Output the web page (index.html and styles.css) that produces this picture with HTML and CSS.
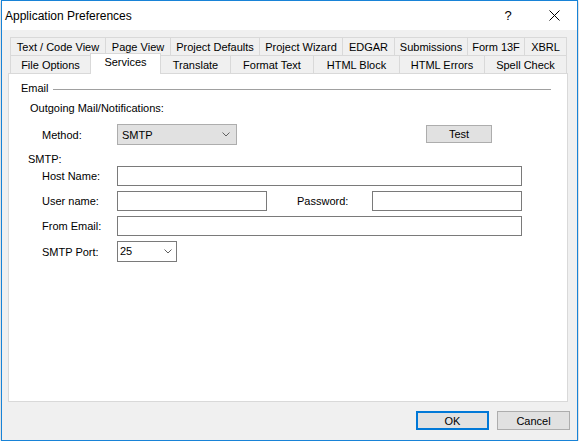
FILE: index.html
```html
<!DOCTYPE html>
<html>
<head>
<meta charset="utf-8">
<link rel="stylesheet" href="styles.css">
</head>
<body>
<div class="window">
  <div class="titlebar">
    <span class="title">Application Preferences</span>
    <span class="tb-btn help">?</span>
    <span class="tb-btn close">
      <svg width="11" height="11" viewBox="0 0 11 11"><path d="M0.5 0.5 L10.5 10.5 M10.5 0.5 L0.5 10.5" stroke="#000" stroke-width="1" fill="none"/></svg>
    </span>
  </div>
  <div class="client">
    <div class="tabs">
      <div class="tabrow top">
        <div class="tab">Text / Code View</div>
        <div class="tab">Page View</div>
        <div class="tab">Project Defaults</div>
        <div class="tab">Project Wizard</div>
        <div class="tab">EDGAR</div>
        <div class="tab">Submissions</div>
        <div class="tab">Form 13F</div>
        <div class="tab">XBRL</div>
      </div>
      <div class="tabrow bottom">
        <div class="tab">File Options</div>
        <div class="tab sel">Services</div>
        <div class="tab">Translate</div>
        <div class="tab">Format Text</div>
        <div class="tab">HTML Block</div>
        <div class="tab">HTML Errors</div>
        <div class="tab">Spell Check</div>
      </div>
      <div class="panel">
        <div class="group-head"><span>Email</span><span class="rule"></span></div>
        <div class="sub">Outgoing Mail/Notifications:</div>
        <div class="method">
          <span class="lbl">Method:</span>
          <div class="combo"><span>SMTP</span>
            <svg width="8" height="5" viewBox="0 0 8 5"><polyline points="0.5,0.5 4,4 7.5,0.5" stroke="#606060" stroke-width="1" fill="none"/></svg>
          </div>
          <button class="btn test">Test</button>
        </div>
        <div class="smtp">SMTP:</div>
        <div class="form">
          <div class="row"><span class="lbl">Host Name:</span><input class="field wide" type="text"></div>
          <div class="row"><span class="lbl">User name:</span><input class="field half" type="text"><span class="lbl lbl2">Password:</span><input class="field half" type="password"></div>
          <div class="row"><span class="lbl">From Email:</span><input class="field wide" type="text"></div>
          <div class="row portrow"><span class="lbl">SMTP Port:</span>
            <div class="port"><span class="portval">25</span>
              <svg width="8" height="5" viewBox="0 0 8 5"><polyline points="0.5,0.5 4,4 7.5,0.5" stroke="#606060" stroke-width="1" fill="none"/></svg>
            </div>
          </div>
        </div>
      </div>
    </div>
    <div class="buttons">
      <button class="btn default">OK</button>
      <button class="btn">Cancel</button>
    </div>
  </div>
</div>
</body>
</html>
```
FILE: styles.css
```css
html, body {
  margin: 0;
  padding: 0;
  background: #ffffff;
}
body {
  font-family: "Liberation Sans", Arial, sans-serif;
  font-size: 11px;
  color: #000;
}
.window {
  box-sizing: border-box;
  width: 577px;
  height: 441px;
  margin-left: 1px;
  border: 1px solid #1883d7;
  background: #f0f0f0;
  display: flex;
  flex-direction: column;
  box-shadow: 0 1px 3px rgba(0, 0, 0, 0.3);
}
.titlebar {
  flex: none;
  height: 29px;
  background: #fff;
  display: flex;
  align-items: center;
}
.title {
  flex: 1;
  padding-left: 3px;
  font-size: 12px;
}
.tb-btn {
  width: 46px;
  height: 29px;
  display: flex;
  align-items: center;
  justify-content: center;
}
.help {
  font-size: 13px;
}
.client {
  flex: 1;
  padding: 7px 7px 0 6px;
  display: flex;
  flex-direction: column;
}
.tabrow {
  display: flex;
  height: 18px;
  margin-left: 2px;
}
.tab {
  box-sizing: border-box;
  height: 18px;
  border-top: 1px solid #d9d9d9;
  border-right: 1px solid #d9d9d9;
  display: flex;
  align-items: center;
  justify-content: center;
  line-height: 16px;
  white-space: nowrap;
}
.tab:first-child {
  border-left: 1px solid #d9d9d9;
}
.top .tab:nth-child(1) { width: 96px; }
.top .tab:nth-child(2) { width: 65px; }
.top .tab:nth-child(3) { width: 89px; }
.top .tab:nth-child(4) { width: 83px; }
.top .tab:nth-child(5) { width: 52px; }
.top .tab:nth-child(6) { width: 73px; }
.top .tab:nth-child(7) { width: 57px; }
.top .tab:nth-child(8) { width: 42px; }
.bottom .tab:nth-child(1) { width: 81px; }
.bottom .tab:nth-child(2) { width: 71px; }
.bottom .tab:nth-child(3) { width: 70px; }
.bottom .tab:nth-child(4) { width: 83px; }
.bottom .tab:nth-child(5) { width: 86px; }
.bottom .tab:nth-child(6) { width: 85px; }
.bottom .tab:nth-child(7) { width: 82px; }
.tab.sel {
  background: #fff;
  margin-top: -2px;
  margin-left: -1px;
  height: 21px;
  border-left: 1px solid #d9d9d9;
  align-items: flex-start;
  position: relative;
  z-index: 1;
}
.panel {
  box-sizing: border-box;
  width: 560px;
  height: 329px;
  border: 1px solid #d9d9d9;
  background: #fff;
}
.group-head {
  display: flex;
  align-items: center;
  margin: 7px 16px 0 12px;
  height: 14px;
  line-height: 14px;
}
.rule {
  flex: 1;
  height: 1px;
  background: #a0a0a0;
  margin-left: 4px;
  margin-top: 2px;
}
.sub {
  margin: 6px 0 0 21px;
  line-height: 14px;
}
.method {
  display: flex;
  align-items: center;
  margin: 9px 0 0 33px;
  height: 21px;
}
.lbl {
  flex: none;
  width: 75px;
}
.combo {
  box-sizing: border-box;
  width: 120px;
  height: 21px;
  border: 1px solid #adadad;
  background: #e1e1e1;
  display: flex;
  align-items: center;
  justify-content: space-between;
  padding: 0 6px 0 4px;
}
.btn {
  box-sizing: border-box;
  width: 73px;
  height: 19px;
  border: 1px solid #adadad;
  background: #e1e1e1;
  font-family: inherit;
  font-size: 11px;
  color: #000;
  padding: 0;
  margin: 0;
}
.btn.default {
  border: 2px solid #0078d7;
}
.test {
  width: 66px;
  height: 18px;
  margin-left: 189px;
  align-self: flex-start;
  margin-top: 1px;
}
.smtp {
  margin: 7px 0 0 19px;
  line-height: 14px;
}
.form {
  display: flex;
  flex-direction: column;
  gap: 5px;
  margin-left: 33px;
}
.row {
  display: flex;
  align-items: center;
  height: 20px;
}
.portrow {
  height: 21px;
}
.field {
  box-sizing: border-box;
  height: 20px;
  border: 1px solid #7a7a7a;
  background: #fff;
  margin: 0;
  padding: 0 2px;
  font-family: inherit;
  font-size: 11px;
  outline: none;
}
.wide { width: 405px; }
.half { width: 150px; }
.lbl2 { margin-left: 30px; }
.port {
  box-sizing: border-box;
  width: 60px;
  height: 21px;
  border: 1px solid #7a7a7a;
  background: #fff;
  display: flex;
  align-items: center;
  justify-content: space-between;
  padding: 0 4px 0 2px;
}
.portval {
  margin-top: -1px;
}
.buttons {
  display: flex;
  justify-content: flex-end;
  gap: 8px;
  margin-top: 9px;
}
```
